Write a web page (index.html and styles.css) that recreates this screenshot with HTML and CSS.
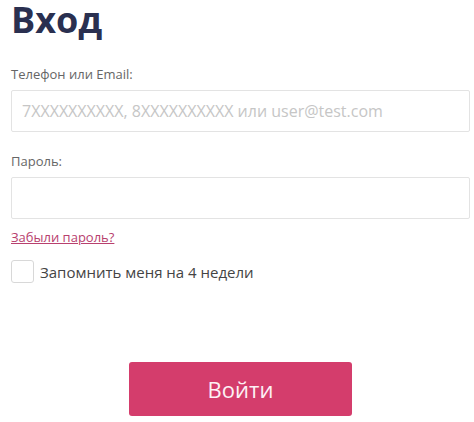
FILE: index.html
```html
<!DOCTYPE html>
<html lang="ru">
<head>
<meta charset="utf-8">
<title>Вход</title>
<link rel="stylesheet" href="styles.css">
</head>
<body>
<main class="login">
  <h1 class="login__title">Вход</h1>
  <form class="login__form">
    <div class="field">
      <label class="field__label" for="login">Телефон или Email:</label>
      <input class="field__input" id="login" type="text" placeholder="7XXXXXXXXXX, 8XXXXXXXXXX или user@test.com">
    </div>
    <div class="field">
      <label class="field__label" for="pass">Пароль:</label>
      <input class="field__input" id="pass" type="password">
    </div>
    <a class="login__forgot" href="#">Забыли пароль?</a>
    <label class="remember">
      <span class="remember__box"></span>
      <span class="remember__text">Запомнить меня на 4 недели</span>
    </label>
    <div class="login__actions">
      <button class="login__submit" type="button">Войти</button>
    </div>
  </form>
</main>
</body>
</html>
```

FILE: styles.css
```css
* { box-sizing: border-box; }
html, body { margin: 0; padding: 0; background: #fff; }
body {
  font-family: "Open Sans", "Liberation Sans", sans-serif;
  color: #444;
}
.login {
  padding: 0 4px 0 11px;
}
.login__title {
  margin: 0;
  font-size: 36px;
  line-height: 39px;
  font-weight: 700;
  color: #2a3050;
}
.login__form {
  display: flex;
  flex-direction: column;
}
.field {
  display: flex;
  flex-direction: column;
}
.field:first-child { margin-top: 27px; }
.field + .field { margin-top: 21px; }
.field__label {
  font-size: 13px;
  line-height: 17px;
  color: #666;
  margin-bottom: 7px;
}
.field__input {
  width: 459px;
  height: 42px;
  border: 1px solid #e3e3e3;
  border-radius: 2px;
  padding: 0 10px;
  font-family: inherit;
  font-size: 16px;
  color: #444;
  outline: none;
}
.field__input::placeholder { color: #c6c6c6; }
.login__forgot {
  align-self: flex-start;
  margin-top: 9px;
  font-size: 13px;
  line-height: 18px;
  color: #b8406e;
  text-decoration: underline;
}
.remember {
  display: flex;
  align-items: center;
  gap: 6px;
  margin-top: 14px;
}
.remember__box {
  width: 23px;
  height: 23px;
  border: 1px solid #d8d8d8;
  border-radius: 3px;
  background: #fff;
}
.remember__text {
  font-size: 15px;
  line-height: 22px;
  color: #444;
}
.login__actions {
  display: flex;
  margin-top: 79px;
  padding-left: 118px;
}
.login__submit {
  width: 223px;
  height: 54px;
  border: none;
  border-radius: 3px;
  background: #d43d6c;
  color: #fdf1f5;
  font-family: inherit;
  font-size: 22px;
  cursor: pointer;
}
```
